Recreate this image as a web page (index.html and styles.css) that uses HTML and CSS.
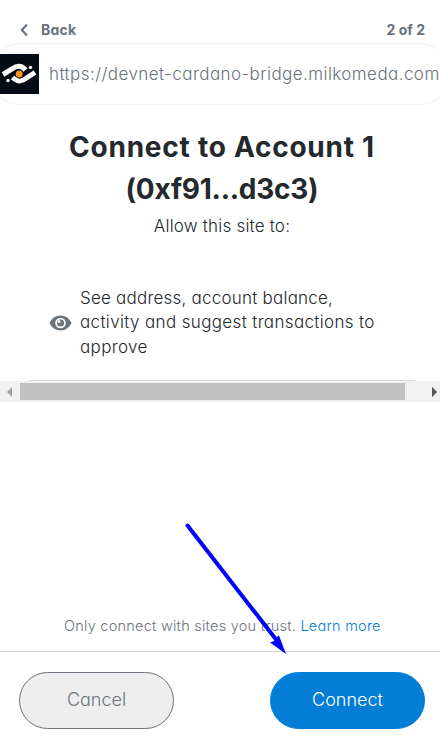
FILE: index.html
```html
<!DOCTYPE html>
<html lang="en">
<head>
<meta charset="utf-8">
<title>Connect account</title>
<link rel="stylesheet" href="styles.css">
</head>
<body>
<main class="popup">
  <header class="topbar">
    <svg class="chevron" viewBox="0 0 8 12"><path d="M7 .6 1.800 6 7 11.400"/></svg>
    <span class="back">Back</span>
    <span class="steps">2 of 2</span>
  </header>
  <section class="origin">
    <svg class="favicon" viewBox="0 0 39 40">
      <path class="favicon-bg" d="M0 0h39v40H0z"/>
      <path class="favicon-arc" d="M3 20.500 12 15C17 11.500 21 10.800 25.500 16"/>
      <path class="favicon-arc" d="M35 18.500 26.500 24C22 28 18 28.500 12.500 23.500"/>
      <circle class="favicon-dot" cx="30.500" cy="13.400" r="1.700"/>
      <circle class="favicon-dot" cx="8" cy="26.500" r="1.700"/>
      <circle class="favicon-core" cx="19.200" cy="20" r="3.500"/>
    </svg>
    <span class="url">https://devnet-cardano-bridge.milkomeda.com</span>
  </section>
  <section class="heading">
    <h1>Connect to Account 1<br><span class="address">(0xf91...d3c3)</span></h1>
    <p class="allow">Allow this site to:</p>
  </section>
  <section class="permission">
    <svg class="eye" viewBox="0 0 22 16"><path class="eye-shape" d="M11 .5C6 .5 2 3.600 0 8 2 12.400 6 15.500 11 15.500S20 12.400 22 8C20 3.600 16 .5 11 .5z"/><circle class="eye-white" cx="11" cy="8" r="5.300"/><circle class="eye-shape" cx="11" cy="8" r="3.600"/><circle class="eye-white" cx="9.500" cy="6.500" r="1.500"/></svg>
    <p class="perm"><span class="perm-first">See address, account balance,</span><br>activity and suggest transactions to<br>approve</p>
  </section>
  <div class="rule"></div>
  <div class="scrollbar">
    <svg class="arrow arrow-left" viewBox="0 0 5 10"><path d="M5 0v10L0 5z"/></svg>
    <div class="thumb"></div>
    <svg class="arrow arrow-right" viewBox="0 0 5 10"><path d="M0 0v10l5-5z"/></svg>
  </div>
  <p class="trust">Only connect with sites you trust. <a class="learn">Learn more</a></p>
  <footer class="actions">
    <button class="btn cancel">Cancel</button>
    <button class="btn connect">Connect</button>
  </footer>
  <svg class="pointer" viewBox="0 0 110 140"><path class="pointer-line" d="M7.500 5.500 98 122"/><path class="pointer-head" d="M106 134 90 122.500 94 121 97 117 99 115.500z"/></svg>
</main>
</body>
</html>
```
FILE: styles.css
```css
* { box-sizing: border-box; margin: 0; }
body { background: #fff; color: #24292e; font-family: Inter, sans-serif; font-feature-settings: "cv11"; }
.popup { position: relative; display: flex; flex-direction: column; width: 440px; height: 749px; overflow: hidden; }
.topbar { display: flex; align-items: center; height: 43px; padding: 16px 15px 0 20px; color: #6a737d; font-size: 14px; font-weight: 700; }
.chevron { width: 8px; height: 12px; margin-right: 13px; fill: none; stroke: #6a737d; stroke-width: 2.200; }
.back { letter-spacing: 0.2px; }
.steps { margin-left: auto; }
.origin { display: flex; align-items: center; flex: none; height: 62px; width: 460px; margin-left: -10px; padding-left: 10px; border: 1px solid #f2f3f4; border-radius: 30px; color: #6a737d; font-size: 17px; font-weight: 350; letter-spacing: 0.43px; white-space: nowrap; }
.favicon { flex: none; width: 39px; height: 40px; margin: 0 10px 0 -1px; }
.favicon-bg { fill: #020a14; }
.favicon-arc { fill: none; stroke: #fff; stroke-width: 5; }
.favicon-dot { fill: #fff; }
.favicon-core { fill: #f7931e; }
.heading { height: 174px; padding-top: 21px; text-align: center; white-space: nowrap; }
h1 { padding-left: 4px; font-size: 28px; line-height: 42px; font-weight: 700; letter-spacing: 0.75px; }
.address { letter-spacing: -0.25px; }
.allow { padding-left: 4px; font-size: 17px; line-height: 32px; font-weight: 350; letter-spacing: 0.2px; }
.permission { display: flex; align-items: center; height: 101px; padding: 0 0 14px 49px; }
.eye { width: 23px; height: 16px; margin-right: 8px; }
.eye-shape { fill: #6a737d; }
.eye-white { fill: #fff; }
.perm { font-size: 17px; line-height: 24.500px; font-weight: 350; letter-spacing: 0.350px; white-space: nowrap; }
.perm-first { letter-spacing: 0.220px; }
.rule { height: 1px; margin: 0 25px 0 29px; background: #d6d9dc; }
.scrollbar { display: flex; align-items: center; flex: none; height: 21px; padding: 0 3px 0 7px; background: #f1f1f1; }
.thumb { width: 385px; height: 17px; background: #c1c1c1; }
.arrow { width: 5px; height: 10px; }
.arrow-left { margin-right: 8px; fill: #a3a3a3; }
.arrow-right { margin-left: auto; fill: #505050; }
.trust { margin-top: auto; height: 35px; padding-left: 64px; color: #6a737d; font-size: 14.500px; line-height: 20px; font-weight: 350; letter-spacing: 0.240px; white-space: nowrap; }
.learn { color: #037dd6; }
.actions { display: flex; justify-content: space-between; flex: none; height: 98px; padding: 20px 15px 0 19px; border-top: 1px solid #d2d5d8; }
.btn { width: 155px; height: 57px; padding-bottom: 3px; border: 1px solid #6a737d; border-radius: 29px; background: #eee; color: #6a737d; font: 350 18px Inter, sans-serif; font-feature-settings: "cv11"; }
.connect { border-color: #037dd6; background: #037dd6; color: #fff; }
.pointer { position: absolute; left: 180px; top: 520px; width: 110px; height: 140px; }
.pointer-line { fill: none; stroke: #00f; stroke-width: 4; stroke-linecap: round; }
.pointer-head { fill: #00f; }
```
